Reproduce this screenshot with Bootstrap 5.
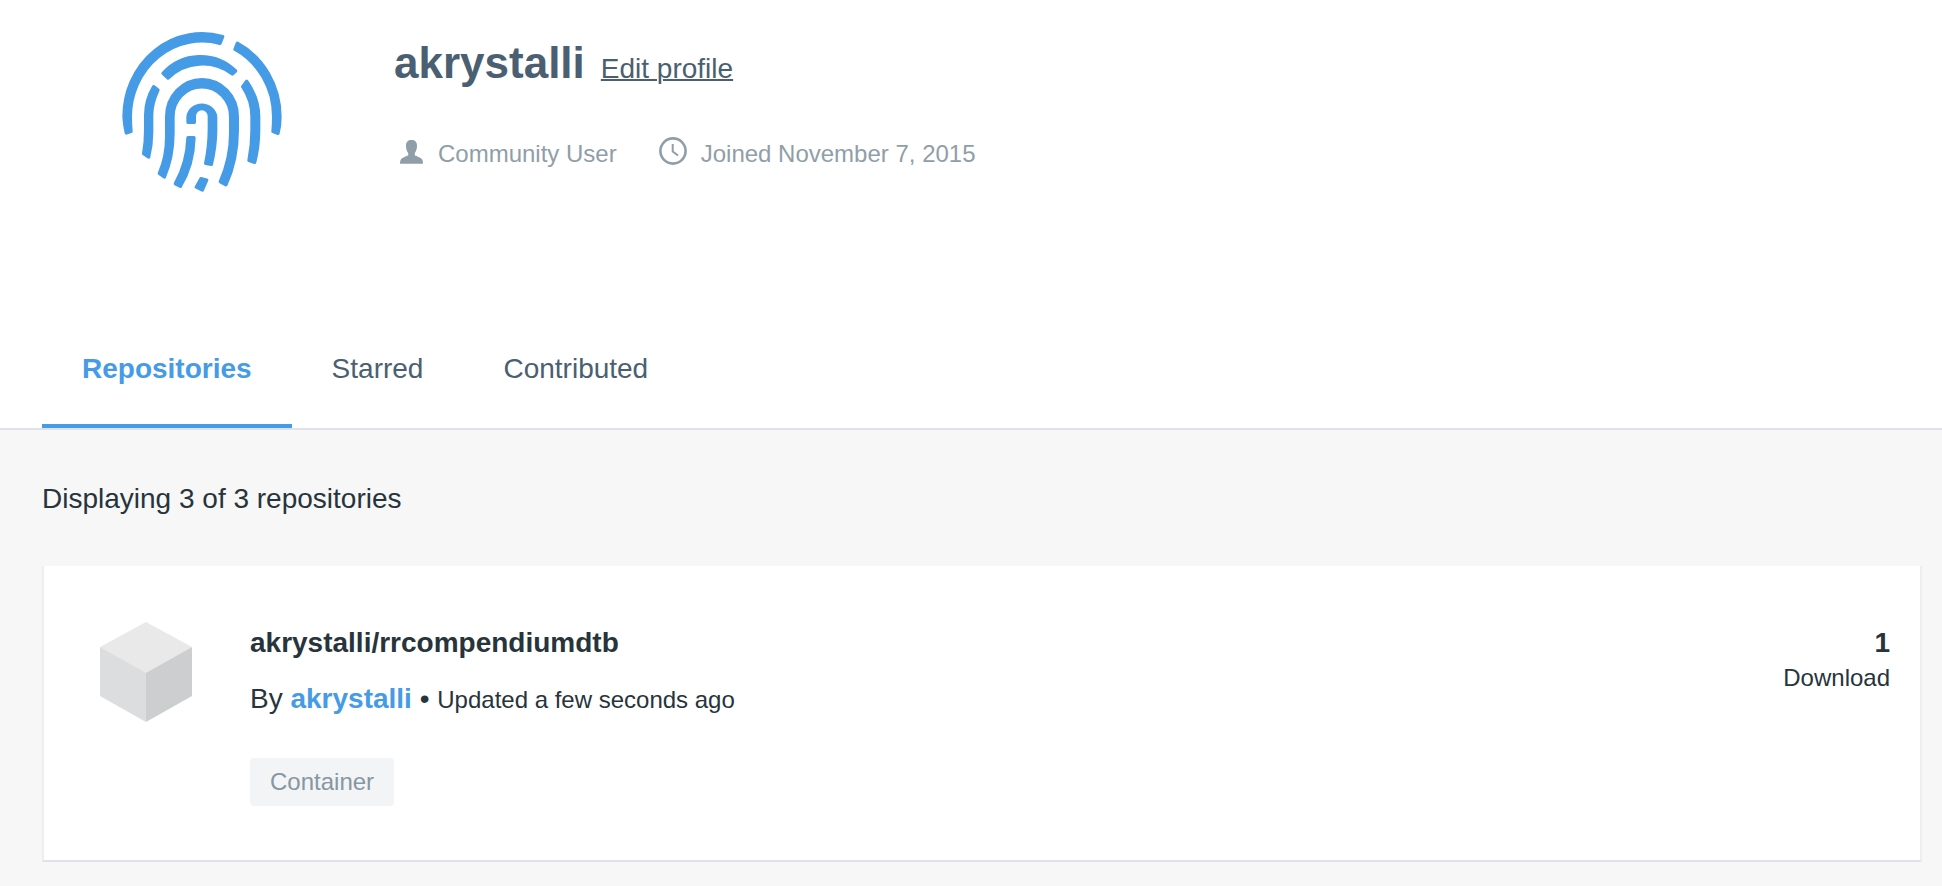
<!DOCTYPE html>
<html lang="en">
<head>
<meta charset="utf-8">
<meta name="viewport" content="width=device-width, initial-scale=1">
<title>akrystalli</title>
<link href="https://cdn.jsdelivr.net/npm/bootstrap@5.3.0/dist/css/bootstrap.min.css" rel="stylesheet">
<style>
  body { font-family: "Liberation Sans", Arial, sans-serif; font-size: 28px; line-height: 42px; color: #27343b; background: #f7f7f7; }
  .profile-top { background: #fff; border-bottom: 2px solid #dfe3e8; }
  .profile-head { padding: 32px 122px 122px; gap: 112px; }
  .profile-name { font-size: 44px; line-height: 62px; color: #4a6072; }
  .edit-link { color: #4a6072; text-decoration-thickness: 2px; }
  .name-row { gap: 16px; margin-bottom: 42px; }
  .meta-row { gap: 42px; padding-left: 6px; font-size: 24px; line-height: 36px; color: #8f9ea8; }
  .meta-item { gap: 14px; }
  .tab-row { padding: 0 42px; }
  .tab-row .nav-link { padding: 34px 40px; color: #4a6072; border-bottom: 4px solid transparent; }
  .tab-row .nav-link.active { color: #459be6; border-color: #459be6; }
  .repo-area { padding: 48px 20px 24px 42px; }
  .count-text { margin-bottom: 46px; }
  .repo-card { background: #fff; border: 2px solid #eee; border-width: 0 2px 2px; border-bottom-color: #dfe3e8; padding: 56px 30px 54px 56px; gap: 58px; }
  .repo-name { font-size: 28px; line-height: 42px; margin-bottom: 14px; }
  .repo-name a { color: inherit; }
  .byline { margin-bottom: 38px; }
  .owner { color: #459be6; }
  .fine-text { font-size: 24px; line-height: 28px; }
  .kind-tag { font-size: 24px; line-height: 48px; padding: 0 20px; border-radius: 4px; background: #f2f4f6; color: #8697a2; }
  .stat-label { font-size: 24px; line-height: 28px; }
</style>
</head>
<body>
<header class="profile-top">
  <div class="profile-head d-flex align-items-start">
    <svg class="flex-shrink-0" width="160" height="160" viewBox="36 36 480 480" fill="#459be6" stroke="#459be6" stroke-width="10" stroke-linejoin="round" role="img" aria-label="Avatar">
      <path d="M49 339A234 248 0 0 1 42 290A234 249 0 0 1 338 50L330 70A215 228 0 0 0 61 290Q61 315 63 334Z"/>
      <path d="M382 70A234 248 0 0 1 510 290Q510 317 504 340L489 334Q491 312 491 290A215 228 0 0 0 375 88Z"/>
      <path d="M159 160A151 151 0 0 1 377 153L367 162A148 148 0 0 0 174 174Z"/>
      <path d="M131 200L144 210Q125 250 125 285V335Q125 375 116 411L101 401Q107 365 107 330V285Q107 240 131 200Z"/>
      <path d="M398 200L410 184Q446 235 446 290V330Q446 380 434 427L417 421Q426 375 426 330V290Q426 242 398 200Z"/>
      <path d="M148 460Q170 410 170 350V290A106 111 0 0 1 382 290V330Q382 420 348 494L331 485Q362 415 362 340V290A86 89 0 0 0 189 290V340Q189 412 163 471Z"/>
      <path d="M234 307V290A42 41 0 0 1 317 290V330Q317 380 304 433L287 430Q298 380 298 325V288A22 22 0 0 0 253 288V307Z"/>
      <path d="M234 353H252Q250 435 211 499L196 491Q231 430 234 353Z"/>
      <path d="M273 476L290 480L277 510L259 501Z"/>
    </svg>
    <div>
      <div class="name-row d-flex align-items-baseline">
        <h1 class="profile-name fw-bold mb-0">akrystalli</h1>
        <a class="edit-link" href="#">Edit profile</a>
      </div>
      <div class="meta-row d-flex flex-wrap">
        <div class="meta-item d-flex align-items-start">
          <svg class="mt-1" width="24" height="24" viewBox="0 0 24 24" fill="#8f9ea8" aria-hidden="true"><path d="M11.500 0C8 0 6 2 6 5.500c0 3 .7 5.500 2.200 7.500v2.500C5 16.700 2.500 17.500 1.200 19 .2 20.300 0 22 0 23.800h23c0-1.800-.2-3.500-1.200-4.800-1.300-1.500-3.800-2.300-7-3.500V13C16.300 11 17 8.500 17 5.500 17 2 15 0 11.500 0z"/></svg>
          <span>Community User</span>
        </div>
        <div class="meta-item d-flex align-items-start">
          <svg width="28" height="30" viewBox="0 0 28 30" fill="none" stroke="#8f9ea8" aria-hidden="true"><circle cx="14" cy="15" r="12.600" stroke-width="2.600"/><path d="M13.700 8v7.500l5.300 4" stroke-width="2"/></svg>
          <span>Joined November 7, 2015</span>
        </div>
      </div>
    </div>
  </div>
  <nav class="tab-row nav" aria-label="Profile sections">
    <a class="nav-link active fw-bold" aria-current="page" href="#">Repositories</a>
    <a class="nav-link" href="#">Starred</a>
    <a class="nav-link" href="#">Contributed</a>
  </nav>
</header>
<main class="repo-area">
  <p class="count-text">Displaying 3 of 3 repositories</p>
  <article class="repo-card d-flex align-items-start">
    <svg class="flex-shrink-0" width="92" height="100" viewBox="0 0 92 100" aria-hidden="true">
      <path fill="#e9e9e9" d="M46 0L92 25L46 52L0 25Z"/>
      <path fill="#dcdddf" d="M0 25L46 51V100L0 74Z"/>
      <path fill="#cdced0" d="M92 25L46 51V100L92 74Z"/>
    </svg>
    <div class="flex-grow-1">
      <h2 class="repo-name fw-bold"><a class="text-decoration-none" href="#">akrystalli/rrcompendiumdtb</a></h2>
      <p class="byline">By <a class="owner fw-bold text-decoration-none" href="#">akrystalli</a> • <span class="fine-text">Updated a few seconds ago</span></p>
      <span class="kind-tag d-inline-block align-top">Container</span>
    </div>
    <div class="text-end">
      <div class="fw-bold">1</div>
      <div class="stat-label">Download</div>
    </div>
  </article>
</main>
<script src="https://cdn.jsdelivr.net/npm/bootstrap@5.3.0/dist/js/bootstrap.bundle.min.js"></script>
</body>
</html>
